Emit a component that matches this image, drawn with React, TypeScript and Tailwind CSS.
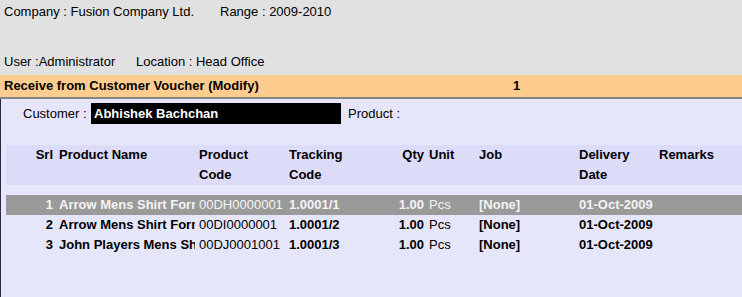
import React from "react";

const rows = [
  { srl: "1", name: "Arrow Mens Shirt Formal", code: "00DH0000001", track: "1.0001/1", qty: "1.00", unit: "Pcs", job: "[None]", date: "01-Oct-2009", sel: true },
  { srl: "2", name: "Arrow Mens Shirt Formal", code: "00DI0000001", track: "1.0001/2", qty: "1.00", unit: "Pcs", job: "[None]", date: "01-Oct-2009", sel: false },
  { srl: "3", name: "John Players Mens Shirt", code: "00DJ0001001", track: "1.0001/3", qty: "1.00", unit: "Pcs", job: "[None]", date: "01-Oct-2009", sel: false },
];

export default function App() {
  return (
    <div className="w-[742px] h-[297px] overflow-hidden flex flex-col text-[13px] text-black" style={{ fontFamily: '"Liberation Sans", Arial, sans-serif' }}>
      <div className="h-[75px] bg-[#e1e1e1] pl-[4px] flex flex-col">
        <div className="mt-[2px] leading-[20px] flex whitespace-nowrap">
          <span className="w-[216px]">Company : Fusion Company Ltd.</span>
          <span>Range : 2009-2010</span>
        </div>
        <div className="mt-[30px] leading-[20px] flex whitespace-nowrap">
          <span className="w-[132px]">User :Administrator</span>
          <span>Location : Head Office</span>
        </div>
      </div>
      <div className="h-[24px] bg-[#ffcc8f] border-b-2 border-[#858585] flex items-center font-bold pl-[4px] whitespace-nowrap">
        <span className="w-[509px]">Receive from Customer Voucher (Modify)</span>
        <span>1</span>
      </div>
      <div className="flex-1 bg-[#e6e6fa] border-l border-[#2e2844] flex flex-col">
        <div className="mt-[4px] h-[21px] flex items-center whitespace-nowrap">
          <span className="ml-[22px] w-[68px]">Customer :</span>
          <div className="w-[250px] h-[21px] bg-black text-white font-bold flex items-center pl-[3px]">Abhishek Bachchan</div>
          <span className="ml-[7px]">Product :</span>
        </div>
        <div className="mt-[21px] ml-[5px] bg-[#dcdcf8] h-[40px] flex font-bold leading-[20px] whitespace-nowrap">
          <div className="w-[47px] text-right">Srl</div>
          <div className="ml-[6px] w-[140px]">Product Name</div>
          <div className="w-[90px]">Product<br />Code</div>
          <div className="w-[100px]">Tracking<br />Code</div>
          <div className="w-[35px] text-right">Qty</div>
          <div className="ml-[5px] w-[50px]">Unit</div>
          <div className="w-[100px]">Job</div>
          <div className="w-[80px]">Delivery<br />Date</div>
          <div>Remarks</div>
        </div>
        <div className="mt-[10px] ml-[5px] flex flex-col">
          {rows.map((r) => (
            <div key={r.srl} className={`h-[20px] flex items-center whitespace-nowrap ${r.sel ? "bg-[#9a9a9a] text-[#f4f4f4]" : ""}`}>
              <div className="w-[47px] text-right font-bold">{r.srl}</div>
              <div className="ml-[6px] w-[136px] overflow-hidden font-bold">{r.name}</div>
              <div className="ml-[4px] w-[90px]">{r.code}</div>
              <div className="w-[100px] font-bold">{r.track}</div>
              <div className="w-[35px] text-right font-bold">{r.qty}</div>
              <div className="ml-[5px] w-[50px]">{r.unit}</div>
              <div className="w-[100px] font-bold">{r.job}</div>
              <div className="w-[80px] font-bold">{r.date}</div>
            </div>
          ))}
        </div>
      </div>
    </div>
  );
}
